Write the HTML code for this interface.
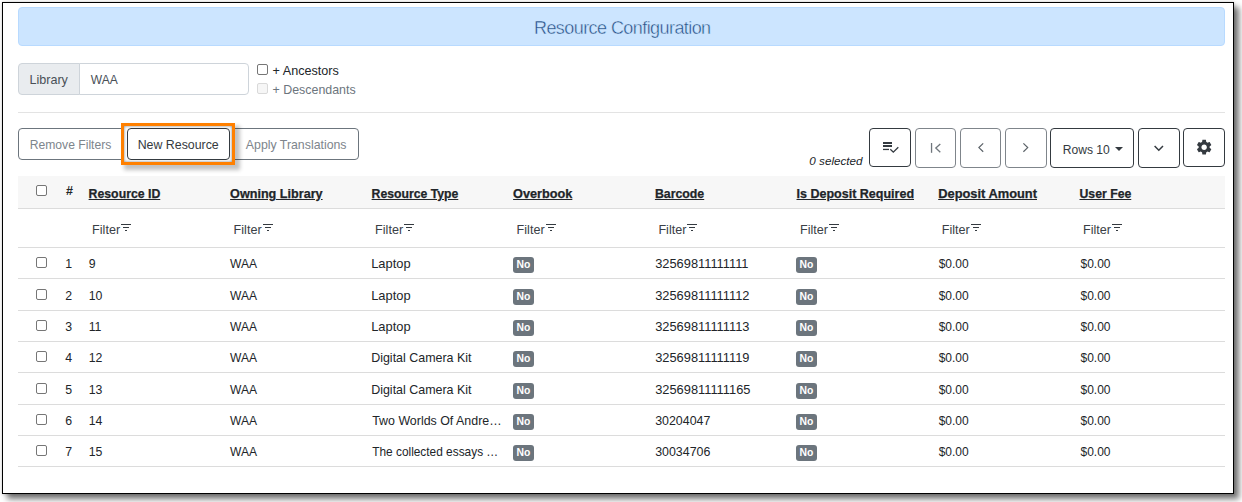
<!DOCTYPE html>
<html><head><meta charset="utf-8"><style>
html,body{margin:0;padding:0;}
body{width:1242px;height:502px;position:relative;overflow:hidden;background:#fff;font-family:"Liberation Sans", sans-serif;}
.t{position:absolute;white-space:nowrap;font-family:"Liberation Sans", sans-serif;line-height:20px;}
.badge{position:absolute;width:21px;height:16px;box-sizing:border-box;background:#6c757d;color:#fff;border-radius:3px;font:700 10.4px/16px "Liberation Sans", sans-serif;text-align:center;}
</style></head><body>
<div style="position:absolute;left:2px;top:2px;width:1232px;height:492px;box-sizing:border-box;border:1px solid #000;background:#fff;box-shadow:5px 5px 6px rgba(0,0,0,.55), 0 0 3px rgba(0,0,0,.2);"></div>
<div style="position:absolute;left:18px;top:7px;width:1207px;height:39px;box-sizing:border-box;background:#cce5ff;border:1px solid #b8daff;border-radius:4px;"></div>
<div class="t" style="left:534.00px;top:18px;font-size:18px;font-weight:400;color:#24497f;font-style:normal;letter-spacing:-0.57px;-webkit-text-stroke:0.45px #cce5ff;">Resource Configuration</div>
<div style="position:absolute;left:18px;top:63px;width:62px;height:32px;box-sizing:border-box;background:#e9ecef;border:1px solid #ced4da;border-radius:4px 0 0 4px;"></div>
<div style="position:absolute;left:79px;top:63px;width:170px;height:32px;box-sizing:border-box;background:#fff;border:1px solid #ced4da;border-radius:0 4px 4px 0;"></div>
<div class="t" style="left:29.40px;top:70px;font-size:12.6px;font-weight:400;color:#495057;font-style:normal;">Library</div>
<div class="t" style="left:90.80px;top:70px;font-size:12.05px;font-weight:400;color:#495057;font-style:normal;">WAA</div>
<div style="position:absolute;left:257px;top:64px;width:11px;height:11px;box-sizing:border-box;border:1px solid #767676;border-radius:2px;background:#fff;"></div>
<div style="position:absolute;left:257px;top:83px;width:11px;height:11px;box-sizing:border-box;border:1px solid #d9d9d9;border-radius:2px;background:#f6f6f6;"></div>
<div class="t" style="left:272.60px;top:61px;font-size:12.6px;font-weight:400;color:#212529;font-style:normal;">+ Ancestors</div>
<div class="t" style="left:272.60px;top:80px;font-size:12.4px;font-weight:400;color:#6c757d;font-style:normal;">+ Descendants</div>
<div style="position:absolute;left:18px;top:112px;width:1207px;height:1px;box-sizing:border-box;background:#e3e3e3;"></div>
<div style="position:absolute;left:18px;top:128px;width:341px;height:32px;box-sizing:border-box;border:1px solid #6c757d;border-radius:4px;background:#fff;"></div>
<div class="t" style="left:29.70px;top:135px;font-size:12.15px;font-weight:400;color:#7d858c;font-style:normal;">Remove Filters</div>
<div class="t" style="left:245.80px;top:135px;font-size:12.34px;font-weight:400;color:#7d858c;font-style:normal;">Apply Translations</div>
<div style="position:absolute;left:124px;top:126px;width:108px;height:36px;box-sizing:border-box;background:#fff;"></div>
<div style="position:absolute;left:121px;top:123px;width:114px;height:42px;box-sizing:border-box;border:3px solid #ff8000;box-shadow:4px 4px 4px 1px rgba(0,0,0,.24), inset 0 0 3px rgba(0,0,0,.5);"></div>
<div style="position:absolute;left:127px;top:128px;width:103px;height:32px;box-sizing:border-box;border:1px solid #343a40;border-radius:4px;background:#fff;"></div>
<div class="t" style="left:137.70px;top:135px;font-size:12.36px;font-weight:400;color:#343a40;font-style:normal;">New Resource</div>
<div class="t" style="left:809.30px;top:151px;font-size:11.7px;font-weight:400;color:#212529;font-style:italic;">0 selected</div>
<div style="position:absolute;left:869px;top:128px;width:42px;height:39px;box-sizing:border-box;border:1px solid #343a40;border-radius:4px;background:#fff;"></div>
<div style="position:absolute;left:915px;top:128px;width:41px;height:40px;box-sizing:border-box;border:1px solid #7f858b;border-radius:4px;background:#fff;"></div>
<div style="position:absolute;left:960px;top:128px;width:41px;height:40px;box-sizing:border-box;border:1px solid #7f858b;border-radius:4px;background:#fff;"></div>
<div style="position:absolute;left:1005px;top:128px;width:42px;height:40px;box-sizing:border-box;border:1px solid #7f858b;border-radius:4px;background:#fff;"></div>
<div style="position:absolute;left:1050px;top:128px;width:84px;height:40px;box-sizing:border-box;border:1px solid #343a40;border-radius:4px;background:#fff;"></div>
<div style="position:absolute;left:1138px;top:128px;width:42px;height:40px;box-sizing:border-box;border:1px solid #343a40;border-radius:4px;background:#fff;"></div>
<div style="position:absolute;left:1183px;top:128px;width:42px;height:39px;box-sizing:border-box;border:1px solid #343a40;border-radius:4px;background:#fff;"></div>
<div class="t" style="left:1062.70px;top:140px;font-size:12.1px;font-weight:400;color:#343a40;font-style:normal;">Rows 10</div>
<div style="position:absolute;left:1115px;top:147px;width:0;height:0;border-top:4px solid #343a40;border-left:4px solid transparent;border-right:4px solid transparent;"></div>
<svg style="position:absolute;left:1194.85px;top:137.6px;width:18.3px;height:18.3px;" viewBox="0 0 24 24"><path d="M19.14,12.94c0.04-0.3,0.06-0.61,0.06-0.94c0-0.32-0.02-0.64-0.07-0.94l2.03-1.58c0.18-0.14,0.23-0.41,0.12-0.61l-1.92-3.32c-0.12-0.22-0.37-0.29-0.59-0.22l-2.39,0.96c-0.5-0.38-1.03-0.7-1.62-0.94L14.4,2.81c-0.04-0.24-0.24-0.41-0.48-0.41h-3.84c-0.24,0-0.43,0.17-0.47,0.41L9.25,5.35C8.66,5.59,8.12,5.92,7.63,6.29L5.24,5.33c-0.22-0.08-0.47,0-0.59,0.22L2.74,8.87C2.62,9.08,2.66,9.34,2.86,9.48l2.03,1.58C4.84,11.36,4.8,11.69,4.8,12s0.02,0.64,0.07,0.94l-2.03,1.58c-0.18,0.14-0.23,0.41-0.12,0.61l1.92,3.32c0.12,0.22,0.37,0.29,0.59,0.22l2.39-0.96c0.5,0.38,1.03,0.7,1.62,0.94l0.36,2.54c0.05,0.24,0.24,0.41,0.48,0.41h3.84c0.24,0,0.44-0.17,0.47-0.41l0.36-2.54c0.59-0.24,1.13-0.56,1.62-0.94l2.39,0.96c0.22,0.08,0.47,0,0.59-0.22l1.92-3.32c0.12-0.22,0.07-0.47-0.12-0.61L19.14,12.94z M12,15.6c-1.98,0-3.6-1.62-3.6-3.6s1.62-3.6,3.6-3.6s3.6,1.62,3.6,3.6S13.98,15.6,12,15.6z" fill="#343a40"/></svg>
<svg style="position:absolute;left:878px;top:137px;width:26px;height:20px" viewBox="0 0 26 20"><rect x="5" y="5" width="9" height="2" fill="#343a40"/><rect x="5" y="8" width="9" height="2" fill="#343a40"/><rect x="5" y="11.8" width="6" height="1.3" fill="#343a40"/><polyline points="12.3,12.2 15.3,15.2 20.3,10.2" fill="none" stroke="#343a40" stroke-width="1.3"/></svg>
<div style="position:absolute;left:18px;top:176px;width:1207px;height:33px;box-sizing:border-box;background:#f7f7f7;border-bottom:1px solid #dcdcdc;"></div>
<div style="position:absolute;left:36px;top:185px;width:11px;height:11px;box-sizing:border-box;border:1px solid #767676;border-radius:2px;background:#fff;"></div>
<div class="t" style="left:65.90px;top:181px;font-size:12.5px;font-weight:700;color:#212529;font-style:normal;">#</div>
<div class="t" style="left:88.60px;top:184px;font-size:12.29px;font-weight:700;color:#212529;font-style:normal;text-decoration:underline;-webkit-text-stroke:0.25px #212529;">Resource ID</div>
<div class="t" style="left:230.10px;top:184px;font-size:12.62px;font-weight:700;color:#212529;font-style:normal;text-decoration:underline;-webkit-text-stroke:0.25px #212529;">Owning Library</div>
<div class="t" style="left:371.60px;top:184px;font-size:12.23px;font-weight:700;color:#212529;font-style:normal;text-decoration:underline;-webkit-text-stroke:0.25px #212529;">Resource Type</div>
<div class="t" style="left:513.10px;top:184px;font-size:12.7px;font-weight:700;color:#212529;font-style:normal;text-decoration:underline;-webkit-text-stroke:0.25px #212529;">Overbook</div>
<div class="t" style="left:654.90px;top:184px;font-size:12.33px;font-weight:700;color:#212529;font-style:normal;text-decoration:underline;-webkit-text-stroke:0.25px #212529;">Barcode</div>
<div class="t" style="left:796.50px;top:184px;font-size:12.53px;font-weight:700;color:#212529;font-style:normal;text-decoration:underline;-webkit-text-stroke:0.25px #212529;">Is Deposit Required</div>
<div class="t" style="left:938.20px;top:184px;font-size:12.87px;font-weight:700;color:#212529;font-style:normal;text-decoration:underline;-webkit-text-stroke:0.25px #212529;">Deposit Amount</div>
<div class="t" style="left:1079.50px;top:184px;font-size:12.25px;font-weight:700;color:#212529;font-style:normal;text-decoration:underline;-webkit-text-stroke:0.25px #212529;">User Fee</div>
<div class="t" style="left:92.10px;top:220px;font-size:12.6px;font-weight:400;color:#3a4046;font-style:normal;">Filter</div>
<div style="position:absolute;left:121px;top:224px;width:10px;height:1px;box-sizing:border-box;background:#343a40;"></div>
<div style="position:absolute;left:123px;top:227px;width:6px;height:1px;box-sizing:border-box;background:#343a40;"></div>
<div style="position:absolute;left:125px;top:230px;width:2px;height:1px;box-sizing:border-box;background:#343a40;"></div>
<div class="t" style="left:233.60px;top:220px;font-size:12.6px;font-weight:400;color:#3a4046;font-style:normal;">Filter</div>
<div style="position:absolute;left:263px;top:224px;width:10px;height:1px;box-sizing:border-box;background:#343a40;"></div>
<div style="position:absolute;left:265px;top:227px;width:6px;height:1px;box-sizing:border-box;background:#343a40;"></div>
<div style="position:absolute;left:267px;top:230px;width:2px;height:1px;box-sizing:border-box;background:#343a40;"></div>
<div class="t" style="left:375.10px;top:220px;font-size:12.6px;font-weight:400;color:#3a4046;font-style:normal;">Filter</div>
<div style="position:absolute;left:404px;top:224px;width:10px;height:1px;box-sizing:border-box;background:#343a40;"></div>
<div style="position:absolute;left:406px;top:227px;width:6px;height:1px;box-sizing:border-box;background:#343a40;"></div>
<div style="position:absolute;left:408px;top:230px;width:2px;height:1px;box-sizing:border-box;background:#343a40;"></div>
<div class="t" style="left:516.60px;top:220px;font-size:12.6px;font-weight:400;color:#3a4046;font-style:normal;">Filter</div>
<div style="position:absolute;left:546px;top:224px;width:10px;height:1px;box-sizing:border-box;background:#343a40;"></div>
<div style="position:absolute;left:548px;top:227px;width:6px;height:1px;box-sizing:border-box;background:#343a40;"></div>
<div style="position:absolute;left:550px;top:230px;width:2px;height:1px;box-sizing:border-box;background:#343a40;"></div>
<div class="t" style="left:658.40px;top:220px;font-size:12.6px;font-weight:400;color:#3a4046;font-style:normal;">Filter</div>
<div style="position:absolute;left:687px;top:224px;width:10px;height:1px;box-sizing:border-box;background:#343a40;"></div>
<div style="position:absolute;left:689px;top:227px;width:6px;height:1px;box-sizing:border-box;background:#343a40;"></div>
<div style="position:absolute;left:691px;top:230px;width:2px;height:1px;box-sizing:border-box;background:#343a40;"></div>
<div class="t" style="left:800.00px;top:220px;font-size:12.6px;font-weight:400;color:#3a4046;font-style:normal;">Filter</div>
<div style="position:absolute;left:829px;top:224px;width:10px;height:1px;box-sizing:border-box;background:#343a40;"></div>
<div style="position:absolute;left:831px;top:227px;width:6px;height:1px;box-sizing:border-box;background:#343a40;"></div>
<div style="position:absolute;left:833px;top:230px;width:2px;height:1px;box-sizing:border-box;background:#343a40;"></div>
<div class="t" style="left:941.70px;top:220px;font-size:12.6px;font-weight:400;color:#3a4046;font-style:normal;">Filter</div>
<div style="position:absolute;left:971px;top:224px;width:10px;height:1px;box-sizing:border-box;background:#343a40;"></div>
<div style="position:absolute;left:973px;top:227px;width:6px;height:1px;box-sizing:border-box;background:#343a40;"></div>
<div style="position:absolute;left:975px;top:230px;width:2px;height:1px;box-sizing:border-box;background:#343a40;"></div>
<div class="t" style="left:1083.00px;top:220px;font-size:12.6px;font-weight:400;color:#3a4046;font-style:normal;">Filter</div>
<div style="position:absolute;left:1112px;top:224px;width:10px;height:1px;box-sizing:border-box;background:#343a40;"></div>
<div style="position:absolute;left:1114px;top:227px;width:6px;height:1px;box-sizing:border-box;background:#343a40;"></div>
<div style="position:absolute;left:1116px;top:230px;width:2px;height:1px;box-sizing:border-box;background:#343a40;"></div>
<div style="position:absolute;left:36px;top:257px;width:11px;height:11px;box-sizing:border-box;border:1px solid #767676;border-radius:2px;background:#fff;"></div>
<div class="t" style="left:65.30px;top:254px;font-size:12.3px;font-weight:400;color:#212529;font-style:normal;">1</div>
<div class="t" style="left:88.70px;top:254px;font-size:12.3px;font-weight:400;color:#212529;font-style:normal;">9</div>
<div class="t" style="left:230.00px;top:254px;font-size:12.05px;font-weight:400;color:#212529;font-style:normal;">WAA</div>
<div class="t" style="left:371.20px;top:254px;font-size:12.9px;font-weight:400;color:#212529;font-style:normal;">Laptop</div>
<div class="t" style="left:655.20px;top:254px;font-size:12.85px;font-weight:400;color:#212529;font-style:normal;">32569811111111</div>
<div class="t" style="left:938.70px;top:254px;font-size:12.0px;font-weight:400;color:#212529;font-style:normal;">$0.00</div>
<div class="t" style="left:1080.50px;top:254px;font-size:12.0px;font-weight:400;color:#212529;font-style:normal;">$0.00</div>
<div class="badge" style="left:513px;top:257px;">No</div>
<div class="badge" style="left:796px;top:257px;">No</div>
<div style="position:absolute;left:36px;top:289px;width:11px;height:11px;box-sizing:border-box;border:1px solid #767676;border-radius:2px;background:#fff;"></div>
<div class="t" style="left:65.30px;top:286px;font-size:12.3px;font-weight:400;color:#212529;font-style:normal;">2</div>
<div class="t" style="left:88.70px;top:286px;font-size:12.3px;font-weight:400;color:#212529;font-style:normal;">10</div>
<div class="t" style="left:230.00px;top:286px;font-size:12.05px;font-weight:400;color:#212529;font-style:normal;">WAA</div>
<div class="t" style="left:371.20px;top:286px;font-size:12.9px;font-weight:400;color:#212529;font-style:normal;">Laptop</div>
<div class="t" style="left:655.20px;top:286px;font-size:12.85px;font-weight:400;color:#212529;font-style:normal;">32569811111112</div>
<div class="t" style="left:938.70px;top:286px;font-size:12.0px;font-weight:400;color:#212529;font-style:normal;">$0.00</div>
<div class="t" style="left:1080.50px;top:286px;font-size:12.0px;font-weight:400;color:#212529;font-style:normal;">$0.00</div>
<div class="badge" style="left:513px;top:289px;">No</div>
<div class="badge" style="left:796px;top:289px;">No</div>
<div style="position:absolute;left:36px;top:320px;width:11px;height:11px;box-sizing:border-box;border:1px solid #767676;border-radius:2px;background:#fff;"></div>
<div class="t" style="left:65.30px;top:317px;font-size:12.3px;font-weight:400;color:#212529;font-style:normal;">3</div>
<div class="t" style="left:88.70px;top:317px;font-size:12.3px;font-weight:400;color:#212529;font-style:normal;">11</div>
<div class="t" style="left:230.00px;top:317px;font-size:12.05px;font-weight:400;color:#212529;font-style:normal;">WAA</div>
<div class="t" style="left:371.20px;top:317px;font-size:12.9px;font-weight:400;color:#212529;font-style:normal;">Laptop</div>
<div class="t" style="left:655.20px;top:317px;font-size:12.85px;font-weight:400;color:#212529;font-style:normal;">32569811111113</div>
<div class="t" style="left:938.70px;top:317px;font-size:12.0px;font-weight:400;color:#212529;font-style:normal;">$0.00</div>
<div class="t" style="left:1080.50px;top:317px;font-size:12.0px;font-weight:400;color:#212529;font-style:normal;">$0.00</div>
<div class="badge" style="left:513px;top:320px;">No</div>
<div class="badge" style="left:796px;top:320px;">No</div>
<div style="position:absolute;left:36px;top:351px;width:11px;height:11px;box-sizing:border-box;border:1px solid #767676;border-radius:2px;background:#fff;"></div>
<div class="t" style="left:65.30px;top:348px;font-size:12.3px;font-weight:400;color:#212529;font-style:normal;">4</div>
<div class="t" style="left:88.70px;top:348px;font-size:12.3px;font-weight:400;color:#212529;font-style:normal;">12</div>
<div class="t" style="left:230.00px;top:348px;font-size:12.05px;font-weight:400;color:#212529;font-style:normal;">WAA</div>
<div class="t" style="left:371.20px;top:348px;font-size:12.46px;font-weight:400;color:#212529;font-style:normal;">Digital Camera Kit</div>
<div class="t" style="left:655.20px;top:348px;font-size:12.85px;font-weight:400;color:#212529;font-style:normal;">32569811111119</div>
<div class="t" style="left:938.70px;top:348px;font-size:12.0px;font-weight:400;color:#212529;font-style:normal;">$0.00</div>
<div class="t" style="left:1080.50px;top:348px;font-size:12.0px;font-weight:400;color:#212529;font-style:normal;">$0.00</div>
<div class="badge" style="left:513px;top:351px;">No</div>
<div class="badge" style="left:796px;top:351px;">No</div>
<div style="position:absolute;left:36px;top:383px;width:11px;height:11px;box-sizing:border-box;border:1px solid #767676;border-radius:2px;background:#fff;"></div>
<div class="t" style="left:65.30px;top:380px;font-size:12.3px;font-weight:400;color:#212529;font-style:normal;">5</div>
<div class="t" style="left:88.70px;top:380px;font-size:12.3px;font-weight:400;color:#212529;font-style:normal;">13</div>
<div class="t" style="left:230.00px;top:380px;font-size:12.05px;font-weight:400;color:#212529;font-style:normal;">WAA</div>
<div class="t" style="left:371.20px;top:380px;font-size:12.46px;font-weight:400;color:#212529;font-style:normal;">Digital Camera Kit</div>
<div class="t" style="left:655.20px;top:380px;font-size:12.85px;font-weight:400;color:#212529;font-style:normal;">32569811111165</div>
<div class="t" style="left:938.70px;top:380px;font-size:12.0px;font-weight:400;color:#212529;font-style:normal;">$0.00</div>
<div class="t" style="left:1080.50px;top:380px;font-size:12.0px;font-weight:400;color:#212529;font-style:normal;">$0.00</div>
<div class="badge" style="left:513px;top:383px;">No</div>
<div class="badge" style="left:796px;top:383px;">No</div>
<div style="position:absolute;left:36px;top:414px;width:11px;height:11px;box-sizing:border-box;border:1px solid #767676;border-radius:2px;background:#fff;"></div>
<div class="t" style="left:65.30px;top:411px;font-size:12.3px;font-weight:400;color:#212529;font-style:normal;">6</div>
<div class="t" style="left:88.70px;top:411px;font-size:12.3px;font-weight:400;color:#212529;font-style:normal;">14</div>
<div class="t" style="left:230.00px;top:411px;font-size:12.05px;font-weight:400;color:#212529;font-style:normal;">WAA</div>
<div class="t" style="left:372.20px;top:411px;font-size:12.41px;font-weight:400;color:#212529;font-style:normal;">Two Worlds Of Andre…</div>
<div class="t" style="left:655.20px;top:411px;font-size:12.4px;font-weight:400;color:#212529;font-style:normal;">30204047</div>
<div class="t" style="left:938.70px;top:411px;font-size:12.0px;font-weight:400;color:#212529;font-style:normal;">$0.00</div>
<div class="t" style="left:1080.50px;top:411px;font-size:12.0px;font-weight:400;color:#212529;font-style:normal;">$0.00</div>
<div class="badge" style="left:513px;top:414px;">No</div>
<div class="badge" style="left:796px;top:414px;">No</div>
<div style="position:absolute;left:36px;top:445px;width:11px;height:11px;box-sizing:border-box;border:1px solid #767676;border-radius:2px;background:#fff;"></div>
<div class="t" style="left:65.30px;top:442px;font-size:12.3px;font-weight:400;color:#212529;font-style:normal;">7</div>
<div class="t" style="left:88.70px;top:442px;font-size:12.3px;font-weight:400;color:#212529;font-style:normal;">15</div>
<div class="t" style="left:230.00px;top:442px;font-size:12.05px;font-weight:400;color:#212529;font-style:normal;">WAA</div>
<div class="t" style="left:372.20px;top:442px;font-size:11.89px;font-weight:400;color:#212529;font-style:normal;">The collected essays …</div>
<div class="t" style="left:655.20px;top:442px;font-size:12.4px;font-weight:400;color:#212529;font-style:normal;">30034706</div>
<div class="t" style="left:938.70px;top:442px;font-size:12.0px;font-weight:400;color:#212529;font-style:normal;">$0.00</div>
<div class="t" style="left:1080.50px;top:442px;font-size:12.0px;font-weight:400;color:#212529;font-style:normal;">$0.00</div>
<div class="badge" style="left:513px;top:445px;">No</div>
<div class="badge" style="left:796px;top:445px;">No</div>
<div style="position:absolute;left:18px;top:247px;width:1207px;height:1px;box-sizing:border-box;background:#dcdcdc;"></div>
<div style="position:absolute;left:18px;top:278px;width:1207px;height:1px;box-sizing:border-box;background:#dcdcdc;"></div>
<div style="position:absolute;left:18px;top:310px;width:1207px;height:1px;box-sizing:border-box;background:#dcdcdc;"></div>
<div style="position:absolute;left:18px;top:341px;width:1207px;height:1px;box-sizing:border-box;background:#dcdcdc;"></div>
<div style="position:absolute;left:18px;top:372px;width:1207px;height:1px;box-sizing:border-box;background:#dcdcdc;"></div>
<div style="position:absolute;left:18px;top:404px;width:1207px;height:1px;box-sizing:border-box;background:#dcdcdc;"></div>
<div style="position:absolute;left:18px;top:435px;width:1207px;height:1px;box-sizing:border-box;background:#dcdcdc;"></div>
<div style="position:absolute;left:18px;top:466px;width:1207px;height:1px;box-sizing:border-box;background:#dcdcdc;"></div>
<svg style="position:absolute;left:0;top:0;width:1242px;height:502px;pointer-events:none" viewBox="0 0 1242 502"><rect x="930.9" y="143" width="1.3" height="9.8" fill="#6f767c"/><polyline points="940.3,143.9 935.8,148.1 940.3,152.3" fill="none" stroke="#6f767c" stroke-width="1.3"/><polyline points="983.2,143.4 978.9,147.6 983.2,151.8" fill="none" stroke="#5a6167" stroke-width="1.2"/><polyline points="1023.4,143.4 1027.7,147.6 1023.4,151.8" fill="none" stroke="#5a6167" stroke-width="1.2"/><polyline points="1154.6,146 1158.8,150.2 1163,146" fill="none" stroke="#343a40" stroke-width="1.5"/></svg>
</body></html>
